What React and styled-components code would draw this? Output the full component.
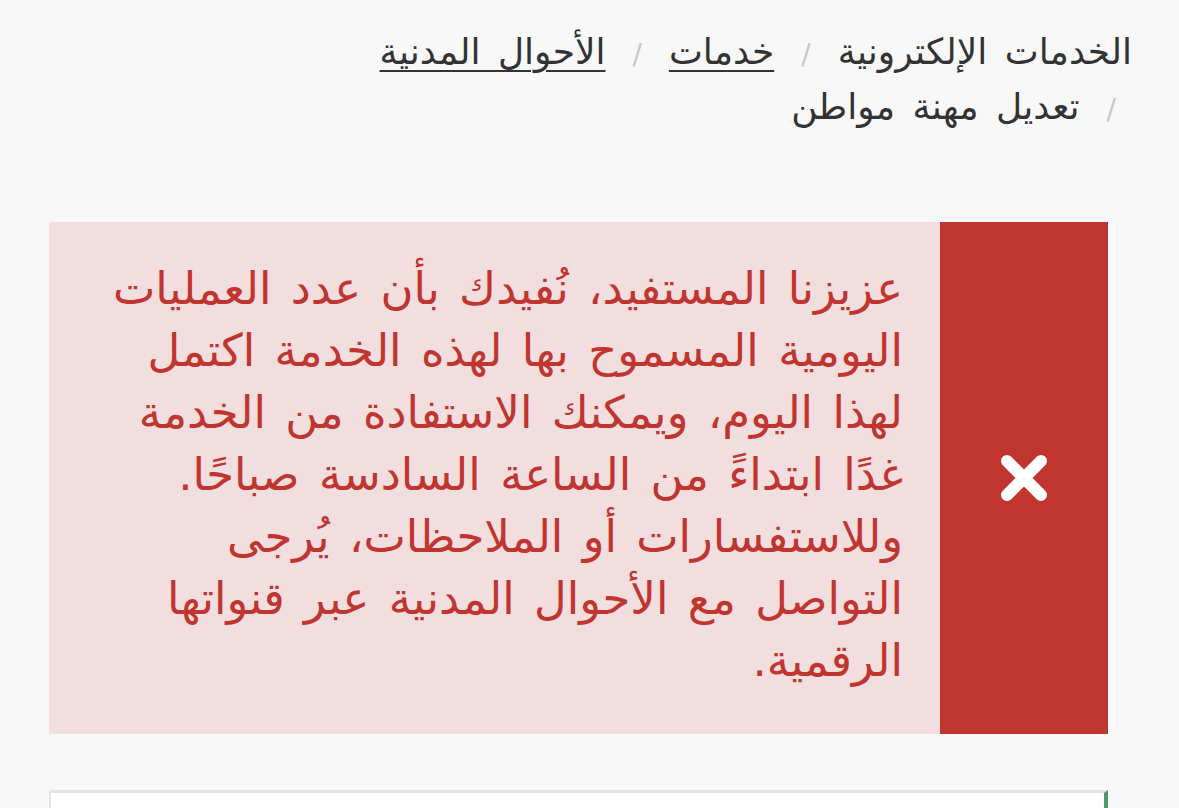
import React from 'react';
import styled, { createGlobalStyle } from 'styled-components';

const GlobalStyle = createGlobalStyle`
  html, body {
    margin: 0;
    padding: 0;
    background: #f8f8f8;
  }
  body {
    font-family: "DejaVu Sans", "Noto Sans", sans-serif;
    overflow: hidden;
  }
`;

const Page = styled.div`
  direction: rtl;
  padding: 26px 47px 0 71px;
  height: 808px;
  box-sizing: border-box;
  overflow: hidden;
`;

const Crumbs = styled.nav`
  font-size: 36px;
  line-height: 52px;
  word-spacing: 6px;
  color: #333;
  margin-bottom: 86px;
`;

const Crumb = styled.a`
  color: #333;
  text-decoration: ${(p) => (p.$link ? 'underline' : 'none')};
  text-underline-offset: 6px;
  text-decoration-thickness: 2px;
`;

const Sep = styled.span`
  color: #c8c8c8;
  padding: 0 ${(p) => (p.$lead ? '16px' : '27px')} 0 27px;
  font-size: 28px;
`;

const Alert = styled.div`
  display: flex;
  margin-left: -22px;
  margin-right: 24px;
  background: #f2dede;
  height: 512px;
`;

const Side = styled.div`
  flex: 0 0 168px;
  background: #c0352f;
  display: flex;
  align-items: center;
  justify-content: center;
`;

const Message = styled.p`
  margin: 0;
  padding: 36px 37px 40px 30px;
  color: #c0352f;
  font-size: 45px;
  line-height: 62px;
  word-spacing: 5px;
  white-space: nowrap;
`;

const Card = styled.div`
  margin: 56px 24px 0 -22px;
  height: 60px;
  background: #fff;
  border-top: 3px solid #e4e4e4;
  border-left: 2px solid #e4e4e4;
  border-right: 4px solid #4f9a6b;
`;

const lines = [
  'عزيزنا المستفيد، نُفيدك بأن عدد العمليات',
  'اليومية المسموح بها لهذه الخدمة اكتمل',
  'لهذا اليوم، ويمكنك الاستفادة من الخدمة',
  'غدًا ابتداءً من الساعة السادسة صباحًا.',
  'وللاستفسارات أو الملاحظات، يُرجى',
  'التواصل مع الأحوال المدنية عبر قنواتها',
  'الرقمية.',
];

const App = () => {
  return (
    <>
      <GlobalStyle />
      <Page>
        <Crumbs>
          <Crumb>الخدمات الإلكترونية</Crumb>
          <Sep>/</Sep>
          <Crumb $link href="#">خدمات</Crumb>
          <Sep>/</Sep>
          <Crumb $link href="#">الأحوال المدنية</Crumb>
          <br />
          <Sep $lead>/</Sep>
          <Crumb>تعديل مهنة مواطن</Crumb>
        </Crumbs>
        <Alert>
          <Side>
            <svg width="50" height="50" viewBox="0 0 50 50">
              <path d="M8 8 L42 42 M42 8 L8 42" stroke="#fff" strokeWidth="12" strokeLinecap="round" />
            </svg>
          </Side>
          <Message>
            {lines.map((l, i) => (
              <React.Fragment key={i}>
                {l}
                {i < lines.length - 1 && <br />}
              </React.Fragment>
            ))}
          </Message>
        </Alert>
        <Card />
      </Page>
    </>
  );
};

export default App;
